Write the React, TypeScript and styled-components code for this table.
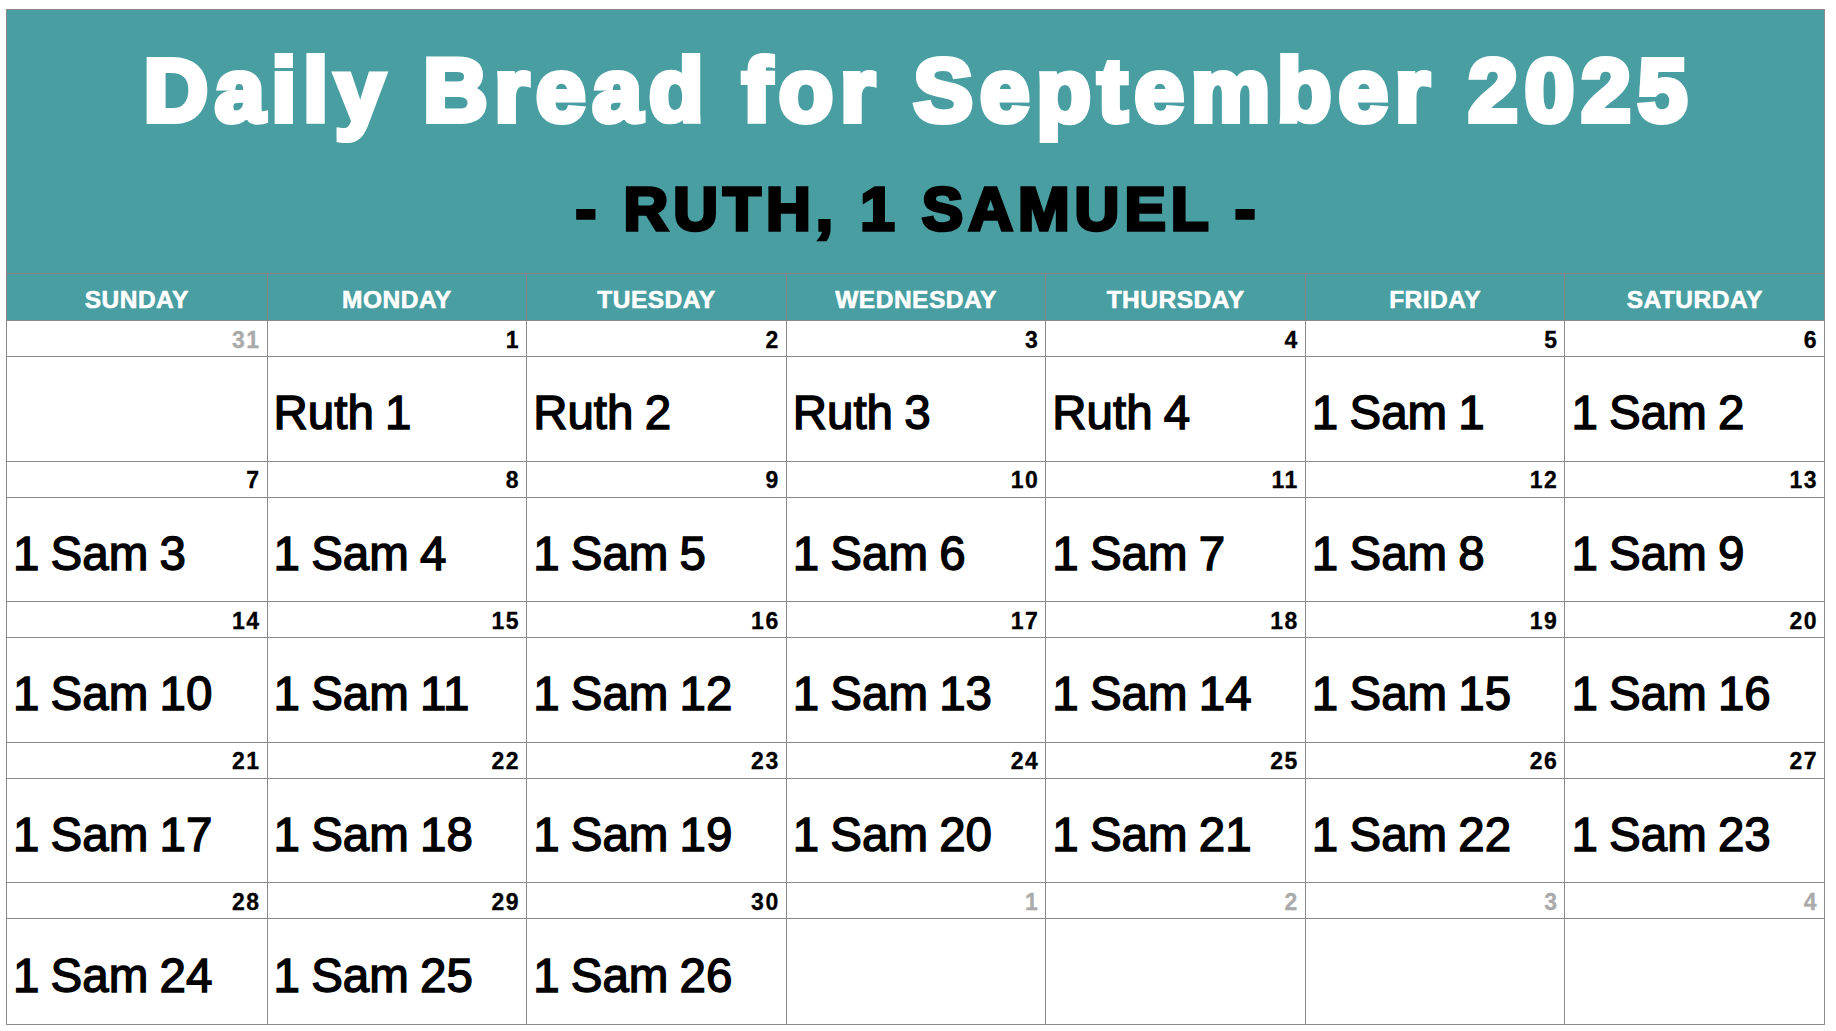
import React from "react";
import styled, { createGlobalStyle } from "styled-components";

const GlobalStyle = createGlobalStyle`
  html, body { margin: 0; padding: 0; background: #ffffff; }
  body { font-family: "Liberation Sans", Arial, Helvetica, sans-serif; }
  * { box-sizing: border-box; }
`;

const TEAL = "#489ea1";
const GRID = "#8a8a8a";
const HEADER_LINE = "#8d8282";

const Page = styled.div`
  padding: 9px 0 0 6px;
`;

const Calendar = styled.div`
  width: 1819px;
  border: 1px solid ${GRID};
  background: #ffffff;
`;

const Banner = styled.header`
  height: 263px;
  background: ${TEAL};
  display: flex;
  flex-direction: column;
  align-items: center;
  padding-top: 36px;
`;

const Title = styled.h1`
  margin: 0;
  font-family: "Liberation Sans", Arial, sans-serif;
  font-weight: 700;
  font-size: 89px;
  line-height: 89px;
  letter-spacing: 7px;
  padding-left: 7px;
  color: #ffffff;
  -webkit-text-stroke: 6px #ffffff;
  white-space: nowrap;
`;

const Subtitle = styled.h2`
  margin: 43px 0 0 0;
  font-family: "Liberation Sans", Arial, sans-serif;
  font-weight: 700;
  font-size: 62px;
  line-height: 62px;
  letter-spacing: 5px;
  padding-left: 5px;
  color: #000000;
  -webkit-text-stroke: 3.5px #000000;
  white-space: nowrap;
`;

const WeekdayRow = styled.div`
  display: grid;
  grid-template-columns: repeat(7, 1fr);
  height: 48px;
  background: ${TEAL};
  border-top: 1px solid ${HEADER_LINE};
  border-bottom: 1px solid ${GRID};
`;

const WeekdayCell = styled.div<{ $first: boolean }>`
  display: flex;
  align-items: center;
  justify-content: center;
  border-left: ${(p) => (p.$first ? "none" : `1px solid ${HEADER_LINE}`)};
  color: #ffffff;
  font-weight: 700;
  font-size: 24.5px;
  letter-spacing: 0.5px;
  -webkit-text-stroke: 0.6px #ffffff;
  padding-top: 5px;
`;

const Week = styled.div`
  display: grid;
  grid-template-columns: repeat(7, 1fr);
`;

const Day = styled.div<{ $first: boolean }>`
  display: flex;
  flex-direction: column;
  border-left: ${(p) => (p.$first ? "none" : `1px solid ${GRID}`)};
`;

const DateStrip = styled.div<{ $muted: boolean }>`
  height: 36px;
  border-bottom: 1px solid ${GRID};
  display: flex;
  align-items: center;
  justify-content: flex-end;
  padding: 3px 6px 0 0;
  font-weight: 700;
  font-size: 23px;
  letter-spacing: 1.5px;
  -webkit-text-stroke: 0.3px currentColor;
  color: ${(p) => (p.$muted ? "#aaaaaa" : "#000000")};
`;

const Reading = styled.div<{ $last: boolean }>`
  height: 104.5px;
  border-bottom: ${(p) => (p.$last ? "none" : `1px solid ${GRID}`)};
  display: flex;
  align-items: center;
  padding: 8px 0 0 6px;
  font-size: 47.5px;
  font-weight: 400;
  word-spacing: -2px;
  color: #000000;
  -webkit-text-stroke: 1.4px #000000;
  white-space: nowrap;
`;

type DayInfo = { date: number; muted?: boolean; reading?: string };

const weekdays = [
  "SUNDAY",
  "MONDAY",
  "TUESDAY",
  "WEDNESDAY",
  "THURSDAY",
  "FRIDAY",
  "SATURDAY",
];

const sam = (n: number) => `1 Sam ${n}`;

const weeks: DayInfo[][] = [
  [
    { date: 31, muted: true },
    { date: 1, reading: "Ruth 1" },
    { date: 2, reading: "Ruth 2" },
    { date: 3, reading: "Ruth 3" },
    { date: 4, reading: "Ruth 4" },
    { date: 5, reading: sam(1) },
    { date: 6, reading: sam(2) },
  ],
  [7, 8, 9, 10, 11, 12, 13].map((d) => ({ date: d, reading: sam(d - 4) })),
  [14, 15, 16, 17, 18, 19, 20].map((d) => ({ date: d, reading: sam(d - 4) })),
  [21, 22, 23, 24, 25, 26, 27].map((d) => ({ date: d, reading: sam(d - 4) })),
  [
    { date: 28, reading: sam(24) },
    { date: 29, reading: sam(25) },
    { date: 30, reading: sam(26) },
    { date: 1, muted: true },
    { date: 2, muted: true },
    { date: 3, muted: true },
    { date: 4, muted: true },
  ],
];

export default function App() {
  return (
    <>
      <GlobalStyle />
      <Page>
        <Calendar>
          <Banner>
            <Title>Daily Bread for September 2025</Title>
            <Subtitle>- RUTH, 1 SAMUEL -</Subtitle>
          </Banner>
          <WeekdayRow>
            {weekdays.map((w, i) => (
              <WeekdayCell key={w} $first={i === 0}>
                {w}
              </WeekdayCell>
            ))}
          </WeekdayRow>
          {weeks.map((week, wi) => (
            <Week key={wi}>
              {week.map((day, di) => (
                <Day key={di} $first={di === 0}>
                  <DateStrip $muted={!!day.muted}>{day.date}</DateStrip>
                  <Reading $last={wi === weeks.length - 1}>
                    {day.reading ?? ""}
                  </Reading>
                </Day>
              ))}
            </Week>
          ))}
        </Calendar>
      </Page>
    </>
  );
}
